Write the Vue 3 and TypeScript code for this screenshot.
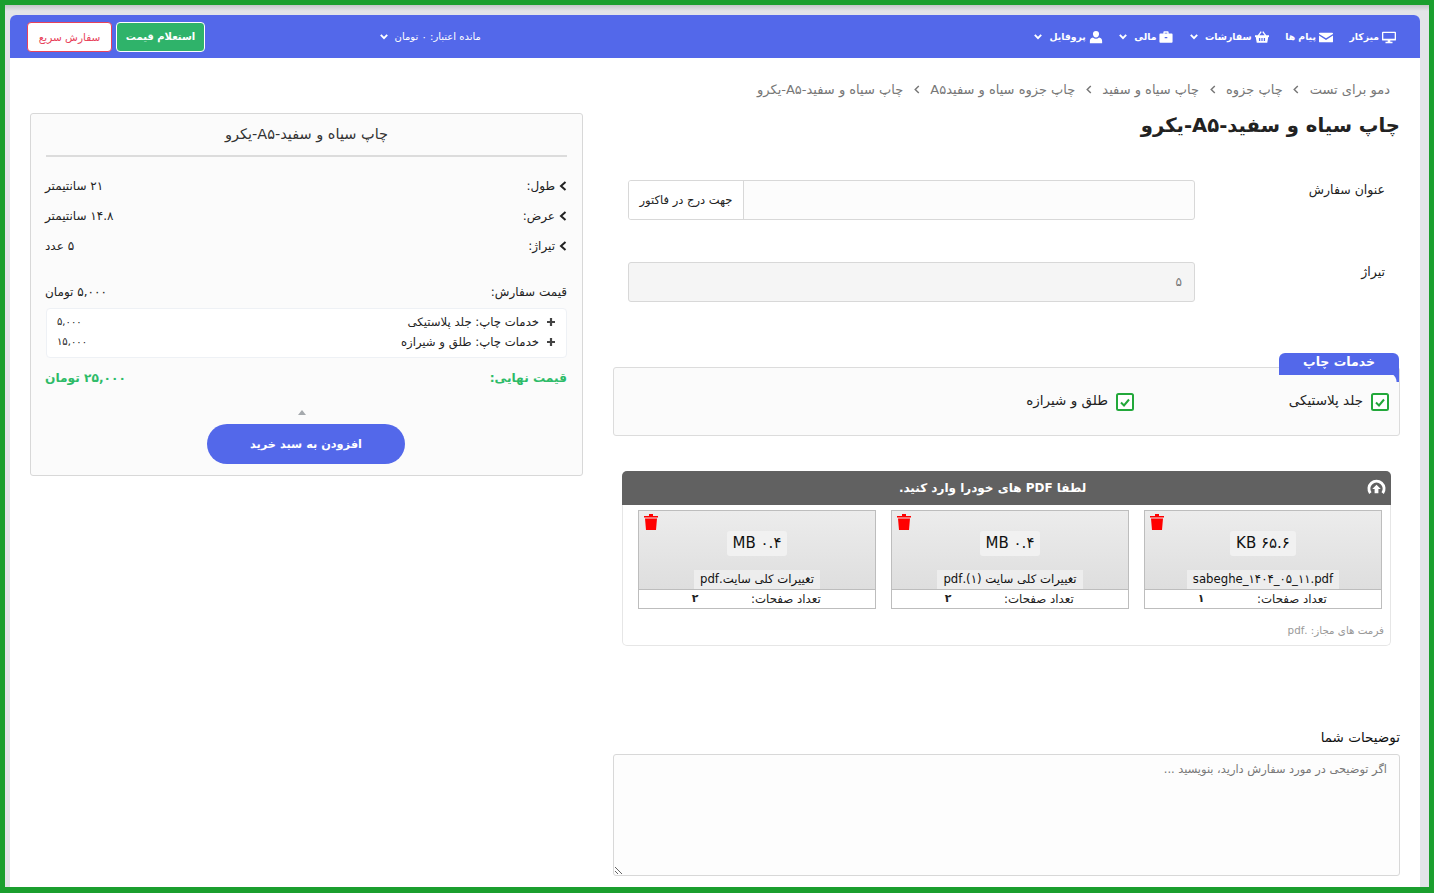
<template>
  <div class="frame" dir="rtl">
    <div class="panel">
      <header class="nav">
        <a v-for="item in navItems" :key="item.label" class="nav-item">
          <svg class="nav-icon" viewBox="0 0 16 16"><path :d="item.icon" fill="#fff" /></svg>
          <span>{{ item.label }}</span>
          <svg v-if="item.arrow" class="caret" viewBox="0 0 10 8"><path d="M1 2l4 4 4-4" fill="none" stroke="#fff" stroke-width="2.4" /></svg>
        </a>
        <a class="nav-item credit">
          <span>مانده اعتبار: ۰ تومان</span>
          <svg class="caret" viewBox="0 0 10 8"><path d="M1 2l4 4 4-4" fill="none" stroke="#fff" stroke-width="2.4" /></svg>
        </a>
        <div class="nav-buttons">
          <button type="button" class="btn-quote">استعلام قیمت</button>
          <button type="button" class="btn-fast">سفارش سریع</button>
        </div>
      </header>

      <div class="content">
        <main class="form-col">
          <nav class="crumbs">
            <template v-for="(crumb, i) in crumbs" :key="crumb">
              <span>{{ crumb }}</span>
              <svg v-if="i < crumbs.length - 1" class="crumb-sep" viewBox="0 0 6 10"><path d="M5 1L1 5l4 4" fill="none" stroke="#777" stroke-width="1.6" /></svg>
            </template>
          </nav>
          <h1 class="title">چاپ سیاه و سفید-A۵-یکرو</h1>

          <div class="field first">
            <label>عنوان سفارش</label>
            <div class="input-group">
              <input type="text" />
              <span class="addon">جهت درج در فاکتور</span>
            </div>
          </div>
          <div class="field second">
            <label>تیراژ</label>
            <div class="input-group disabled"><span class="value">۵</span></div>
          </div>

          <section class="services">
            <div class="tab">خدمات چاپ</div>
            <div class="service" v-for="s in services" :key="s">
              <svg class="check" viewBox="0 0 18 18">
                <rect x="1" y="1" width="16" height="16" rx="1.5" fill="#fff" stroke="#22a83a" stroke-width="2" />
                <path d="M5 9.5l3 3 5-6" fill="none" stroke="#22a83a" stroke-width="2" />
              </svg>
              <span>{{ s }}</span>
            </div>
          </section>

          <section class="upload">
            <div class="upload-head">
              <svg class="upload-icon" viewBox="0 0 20 20">
                <path d="M3.5 16a8 8 0 1 1 13 0" fill="none" stroke="#fff" stroke-width="3" />
                <path d="M10 7l4.500 4.500H12V16H8v-4.500H5.500z" fill="#fff" />
              </svg>
              <span class="upload-title">لطفا PDF های خودرا وارد کنید.</span>
            </div>
            <div class="files">
              <div class="file" v-for="f in files" :key="f.name">
                <div class="file-top">
                  <svg class="trash" viewBox="0 0 14 16">
                    <path d="M0 2h5V0h4v2h5v1.500H0zM1 4.500h12L12 16H2z" fill="#f00" />
                  </svg>
                  <span class="size" dir="ltr">{{ f.size }}</span>
                  <span class="name">{{ f.name }}</span>
                </div>
                <div class="file-pages">
                  <span class="pages-label">تعداد صفحات:</span>
                  <span class="pages-num">{{ f.pages }}</span>
                </div>
              </div>
            </div>
            <div class="formats">فرمت های مجاز: .pdf</div>
          </section>

          <label class="notes-label">توضیحات شما</label>
          <textarea class="notes" placeholder="اگر توضیحی در مورد سفارش دارید، بنویسید ..."></textarea>
        </main>

        <aside class="summary">
          <div class="summary-title">چاپ سیاه و سفید-A۵-یکرو</div>
          <div class="specs">
            <div class="spec" v-for="spec in specs" :key="spec.label">
              <span class="spec-label">
                <svg class="spec-arrow" viewBox="0 0 8 10"><path d="M6.500 1L2 5l4.500 4" fill="none" stroke="#222" stroke-width="2" /></svg>
                {{ spec.label }}
              </span>
              <span>{{ spec.value }}</span>
            </div>
          </div>
          <div class="price-row">
            <span>قیمت سفارش:</span>
            <span>۵,۰۰۰ تومان</span>
          </div>
          <div class="extras">
            <div class="extra" v-for="e in extras" :key="e.label">
              <span class="extra-label">
                <svg class="plus" viewBox="0 0 10 10"><path d="M5 1v8M1 5h8" stroke="#444" stroke-width="2.200" /></svg>
                {{ e.label }}
              </span>
              <span class="extra-price">{{ e.price }}</span>
            </div>
          </div>
          <div class="final-row">
            <span>قیمت نهایی:</span>
            <span>۲۵,۰۰۰ تومان</span>
          </div>
          <div class="up-caret"></div>
          <button type="button" class="add-cart">افزودن به سبد خرید</button>
        </aside>
      </div>
    </div>
  </div>
</template>

<script setup lang="ts">
const navItems = [
  { label: "میزکار", arrow: false, icon: "M1 2h14a1 1 0 0 1 1 1v8a1 1 0 0 1-1 1H9.500v1.500H12V15H4v-1.500h2.500V12H1a1 1 0 0 1-1-1V3a1 1 0 0 1 1-1zm.5 1.500V10h13V3.500z" },
  { label: "پیام ها", arrow: false, icon: "M1 3h14a1 1 0 0 1 1 1v.5L8 9.500 0 4.500V4a1 1 0 0 1 1-1zM0 6.300l8 5 8-5V13a1 1 0 0 1-1 1H1a1 1 0 0 1-1-1z" },
  { label: "سفارشات", arrow: true, icon: "M0 6h3.200L6.500 1.500l1.200.8L5 6h6L8.300 2.300l1.200-.8L12.800 6H16v2h-.8L14 14.500H2L.8 8H0zm4.500 3v3.500H6V9zm2.800 0v3.500h1.400V9zm2.700 0v3.500h1.500V9z" },
  { label: "مالی", arrow: true, icon: "M5 4V2.500A1 1 0 0 1 6 1.500h4a1 1 0 0 1 1 1V4h3.500a1 1 0 0 1 1 1v8.500a1 1 0 0 1-1 1h-13a1 1 0 0 1-1-1V5a1 1 0 0 1 1-1zm1.500 0h3V3h-3zM6.500 8v1.500h3V8z" },
  { label: "پروفایل", arrow: true, icon: "M8 1a3.500 3.500 0 0 1 3.500 3.500c0 2-1.500 4-3.500 4s-3.500-2-3.500-4A3.500 3.500 0 0 1 8 1zM4.500 8.500C5.500 9.500 6.700 10 8 10s2.500-.5 3.500-1.500c2.500.3 3.500 2 3.500 4V15H1v-2.500c0-2 1-3.700 3.500-4z" },
];

const crumbs = [
  "دمو برای تست",
  "چاپ جزوه",
  "چاپ سیاه و سفید",
  "چاپ جزوه سیاه و سفیدA۵",
  "چاپ سیاه و سفید-A۵-یکرو",
];

const services = ["جلد پلاستیکی", "طلق و شیرازه"];

const files = [
  { name: "sabeghe_۱۴۰۴_۰۵_۱۱.pdf", size: "KB ۶۵.۶", pages: "۱" },
  { name: "تغییرات کلی سایت (۱).pdf", size: "MB ۰.۴", pages: "۲" },
  { name: "تغییرات کلی سایت.pdf", size: "MB ۰.۴", pages: "۲" },
];

const specs = [
  { label: "طول:", value: "۲۱ سانتیمتر" },
  { label: "عرض:", value: "۱۴.۸ سانتیمتر" },
  { label: "تیراژ:", value: "۵ عدد" },
];

const extras = [
  { label: "خدمات چاپ: جلد پلاستیکی", price: "۵,۰۰۰" },
  { label: "خدمات چاپ: طلق و شیرازه", price: "۱۵,۰۰۰" },
];
</script>

<style>
html,
body {
  margin: 0;
  overflow: hidden;
}
</style>

<style scoped>
.frame {
  box-sizing: border-box;
  height: 893px;
  overflow: hidden;
  border: 5px solid #1b9f2e;
  border-bottom-width: 6px;
  padding: 10px 9px 0 5px;
  background: linear-gradient(#c4c6c8, #e2e4e8 6px);
  font-family: "DejaVu Sans", sans-serif;
  font-size: 11px;
  color: #222;
}
.panel {
  background: #fff;
  height: 100%;
  border-radius: 6px 6px 0 0;
}

.nav {
  display: flex;
  align-items: center;
  height: 43px;
  padding: 0 24px 0 17px;
  background: #5368ea;
  border-radius: 6px 6px 0 0;
  color: #fff;
  font-size: 9.3px;
  font-weight: 700;
}
.nav-item {
  display: flex;
  align-items: center;
  gap: 3px;
  margin-left: 16.5px;
}
.nav-icon {
  width: 14px;
  height: 14px;
}
.caret {
  width: 8px;
  height: 7px;
  margin-right: 4px;
}
.credit {
  margin-right: 537px;
  font-weight: 500;
  font-size: 10px;
}
.nav-buttons {
  display: flex;
  gap: 4px;
  margin-right: auto;
}
.btn-quote,
.btn-fast {
  height: 30px;
  padding: 0;
  border-radius: 4px;
  font-family: inherit;
  font-size: 10px;
}
.btn-quote {
  width: 89px;
  background: #2fb36a;
  border: 1px solid #fff;
  color: #fff;
  font-weight: 700;
}
.btn-fast {
  width: 85px;
  background: #fff;
  border: 1px solid #e8425a;
  color: #e8425a;
  font-weight: 400;
  font-size: 10.5px;
}

.content {
  display: flex;
  gap: 30px;
  padding: 0 20px;
}
.form-col {
  width: 787px;
  flex: none;
}
.crumbs {
  display: flex;
  align-items: center;
  gap: 10.5px;
  height: 20px;
  margin: 21px 10px 0 0;
  color: #777;
  font-size: 13px;
  white-space: nowrap;
}
.crumb-sep {
  width: 6px;
  height: 9px;
}
.title {
  margin: 11px 0 0;
  height: 32px;
  line-height: 32px;
  font-size: 19.6px;
  font-weight: 700;
  color: #222;
}

.field {
  display: flex;
  justify-content: space-between;
  padding: 0 15px;
}
.field.first {
  margin-top: 38px;
}
.field.second {
  margin-top: 42px;
}
.field label {
  font-size: 12.5px;
  font-weight: 500;
  line-height: 20px;
}
.input-group {
  display: flex;
  box-sizing: border-box;
  width: 567px;
  height: 40px;
  border: 1px solid #d8d8d8;
  border-radius: 3px;
  background: #fcfcfc;
  overflow: hidden;
}
.input-group.disabled {
  background: #f5f5f5;
  align-items: center;
  padding: 0 12px;
  color: #777;
  font-size: 12px;
}
.addon {
  display: flex;
  align-items: center;
  justify-content: center;
  width: 114px;
  background: #fff;
  border-right: 1px solid #d8d8d8;
  font-size: 11.5px;
  white-space: nowrap;
}
.input-group input {
  flex: 1;
  min-width: 0;
  border: 0;
  background: transparent;
}

.services {
  position: relative;
  display: grid;
  grid-template-columns: 255px 255px;
  align-items: center;
  box-sizing: border-box;
  height: 69px;
  margin-top: 65px;
  padding: 0 10px;
  border: 1px solid #dcdcdc;
  border-radius: 3px;
  background: #fbfbfb;
}
.tab {
  position: absolute;
  top: -15px;
  right: 0;
  width: 120px;
  height: 22px;
  background: #5368ea;
  border-radius: 6px 6px 0 0;
  color: #fff;
  font-size: 12.5px;
  font-weight: 700;
  text-align: center;
  line-height: 18px;
}
.tab::after {
  content: "";
  position: absolute;
  top: 100%;
  right: 0;
  width: 12px;
  height: 7px;
  background: radial-gradient(circle at 0 100%, transparent 9px, #5368ea 10px);
}
.service {
  display: flex;
  align-items: center;
  gap: 8px;
  font-size: 13.5px;
}
.service span {
  position: relative;
  top: -2px;
}
.check {
  width: 18px;
  height: 18px;
  flex: none;
}

.upload {
  box-sizing: border-box;
  width: 769px;
  height: 175px;
  margin: 35px 9px 0 0;
  border: 1px solid #e6e6e6;
  border-top: 0;
  border-radius: 5px;
}
.upload-head {
  position: relative;
  height: 34px;
  margin: 0 -1px;
  background: #616161;
  border-radius: 5px 5px 0 0;
  display: flex;
  align-items: center;
  justify-content: center;
  color: #fff;
  font-size: 12px;
  font-weight: 700;
}
.upload-title {
  margin-right: 28px;
}
.upload-icon {
  position: absolute;
  right: 5px;
  top: 7px;
  width: 19px;
  height: 19px;
}
.files {
  display: flex;
  gap: 15px;
  padding: 5px 8px 0;
}
.file {
  box-sizing: border-box;
  width: 238px;
  height: 99px;
  border: 1px solid #bdbdbd;
  display: flex;
  flex-direction: column;
}
.file-top {
  position: relative;
  height: 78px;
  display: flex;
  flex-direction: column;
  align-items: center;
  background: linear-gradient(#ececec, #dedede);
  border-bottom: 1px solid #bdbdbd;
}
.trash {
  position: absolute;
  top: 3px;
  right: 217px;
  width: 14px;
  height: 16px;
}
.size {
  margin-top: 20px;
  padding: 0 6px;
  background: #f1f1f1;
  border-radius: 3px;
  font-size: 15px;
  font-weight: 500;
  line-height: 25px;
  color: #111;
}
.name {
  margin-top: 14px;
  padding: 0 6px;
  background: #ededed;
  font-size: 11.7px;
  line-height: 19px;
  white-space: nowrap;
  color: #111;
}
.file-pages {
  display: flex;
  font-size: 11.8px;
  line-height: 18px;
  height: 19px;
}
.pages-label {
  width: 124px;
  text-align: left;
}
.pages-num {
  width: 112px;
  text-align: center;
  font-weight: 700;
  font-size: 11px;
}
.formats {
  margin: 15px 6px 0 0;
  color: #999;
  font-size: 10.3px;
}

.notes-label {
  display: block;
  margin-top: 83px;
  font-size: 13.5px;
  font-weight: 500;
  line-height: 17px;
  color: #111;
}
.notes {
  display: block;
  box-sizing: border-box;
  width: 787px;
  height: 122px;
  margin-top: 8px;
  padding: 7px 12px;
  border: 1px solid #d8d8d8;
  border-radius: 3px;
  background: #fdfdfd;
  font-family: inherit;
  font-size: 11.4px;
}
.notes::placeholder {
  color: #777;
}

.summary {
  box-sizing: border-box;
  width: 553px;
  height: 363px;
  margin-top: 55px;
  padding: 0 15px 0 14px;
  border: 1px solid #d8d8d8;
  border-radius: 3px;
  background: #fbfbfb;
}
.summary-title {
  height: 41px;
  line-height: 40px;
  margin-left: 1px;
  border-bottom: 2px solid #dcdcdc;
  text-align: center;
  font-size: 14.5px;
  font-weight: 500;
  color: #333;
}
.specs {
  margin-top: 14px;
}
.spec {
  display: flex;
  justify-content: space-between;
  height: 30px;
  line-height: 30px;
  font-size: 12px;
}
.spec-label {
  display: flex;
  align-items: center;
  gap: 4px;
}
.spec-arrow {
  width: 8px;
  height: 10px;
}
.price-row {
  display: flex;
  justify-content: space-between;
  margin-top: 21px;
  line-height: 20px;
  font-size: 12px;
}
.extras {
  box-sizing: border-box;
  height: 50px;
  margin: 6px 0 0 1px;
  padding: 3px 10px;
  background: #fff;
  border: 1px solid #eef1f5;
  border-radius: 4px;
}
.extra {
  display: flex;
  justify-content: space-between;
  height: 20px;
  line-height: 20px;
  font-size: 11.7px;
}
.extra-label {
  display: flex;
  align-items: center;
  gap: 7px;
}
.plus {
  width: 10px;
  height: 10px;
}
.extra-price {
  font-size: 10px;
}
.final-row {
  display: flex;
  justify-content: space-between;
  margin-top: 10px;
  line-height: 20px;
  font-size: 12.2px;
  font-weight: 700;
  color: #2dbb68;
}
.up-caret {
  width: 0;
  height: 0;
  margin: 22px 261px 0 0;
  border: 4.500px solid transparent;
  border-top: 0;
  border-bottom: 5px solid #a5a9ad;
}
.add-cart {
  display: block;
  width: 198px;
  height: 40px;
  margin: 9px 162px 0 0;
  border: 0;
  border-radius: 20px;
  background: #5368ea;
  color: #fff;
  font-family: inherit;
  font-size: 11.3px;
  font-weight: 700;
}
</style>
